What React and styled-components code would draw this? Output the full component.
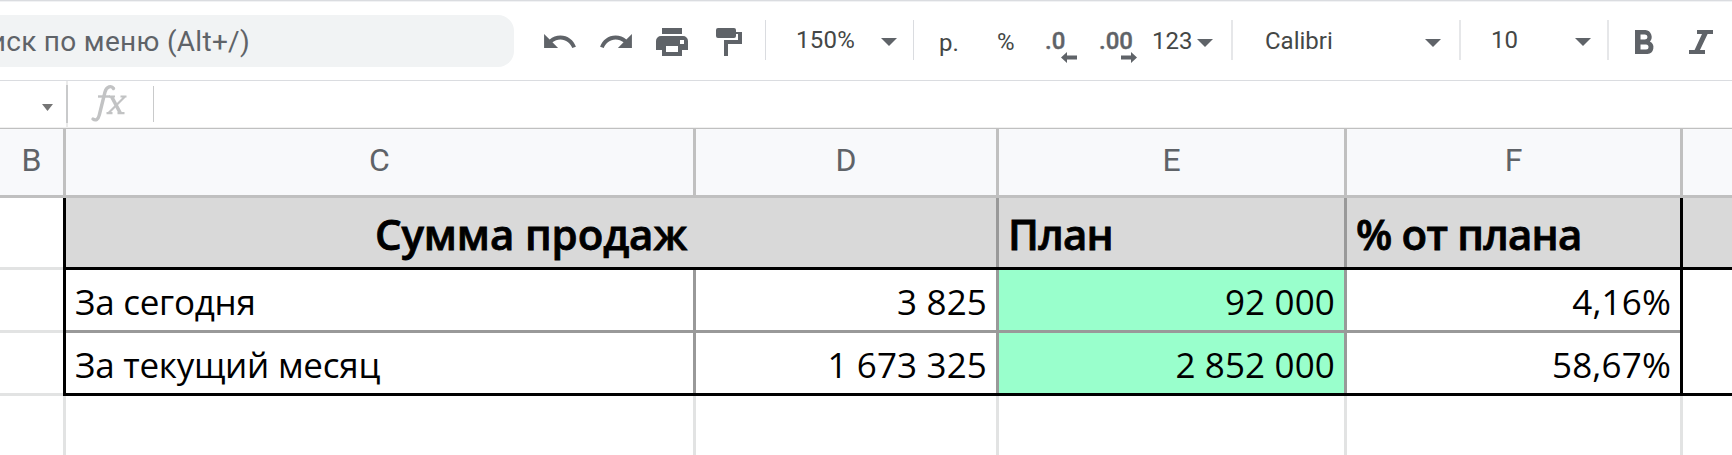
import React from 'react';
import styled, { createGlobalStyle } from 'styled-components';

const GlobalStyle = createGlobalStyle`
  *, *::before, *::after { box-sizing: border-box; }
  html, body { margin: 0; padding: 0; background: #fff; overflow: hidden; }
`;

const Page = styled.main`
  width: 1732px;
  height: 455px;
  overflow: hidden;
  background: #fff;
  font-family: Roboto, "Liberation Sans", sans-serif;
`;

/* Toolbar */

const Toolbar = styled.header`
  display: flex;
  align-items: flex-start;
  height: 81px;
  border-top: 1px solid #dadce0;
  border-bottom: 1px solid #dadce0;
  box-shadow: inset 0 1px 0 #f1f2f4;
`;

const MenuSearch = styled.div`
  flex: none;
  display: flex;
  justify-content: flex-end;
  width: 514px;
  height: 52px;
  margin-top: 14px;
  padding-right: 264px;
  border-radius: 0 16px 16px 0;
  background: #f1f3f4;
  color: #5f6368;
  font-size: 28px;
  line-height: 53px;
  letter-spacing: ${(p) => p.$spacing}px;
  white-space: nowrap;
  overflow: hidden;
`;

const Tool = styled.div`
  flex: none;
  width: ${(p) => p.$w}px;
  margin: ${(p) => p.$top}px 0 0 ${(p) => p.$gap}px;
  line-height: 0;
  color: #5f6368;

  svg { display: block; fill: currentColor; overflow: visible; }
`;

const ToolText = styled(Tool)`
  font-size: 24px;
  line-height: 30px;
  font-weight: ${(p) => (p.$medium ? 500 : 400)};
  color: ${(p) => (p.$medium ? '#5f6368' : '#444746')};
  letter-spacing: ${(p) => p.$spacing || 0}px;
  white-space: nowrap;
`;

const Decimals = styled(ToolText)`
  display: flex;
  flex-direction: column;
  -webkit-text-stroke: 0.4px currentColor;

  svg { align-self: flex-end; margin-top: -4px; }
`;

const Divider = styled.div`
  flex: none;
  width: ${(p) => p.$w || 2}px;
  height: 40px;
  margin: 19px 0 0 ${(p) => p.$gap}px;
  background: ${(p) => (p.$w === 1 ? '#dadce0' : '#e6e7e9')};
`;

const Caret = ({ w = 16, h = 8 }) => (
  <svg width={w} height={h} viewBox="0 0 16 8" preserveAspectRatio="none"><path d="M0 0h16L8 8z" /></svg>
);

const UndoIcon = () => (
  <svg width="32" height="14" viewBox="2 7 20.47 9">
    <path d="M12.5 8c-2.65 0-5.05.99-6.9 2.6L2 7v9h9l-3.62-3.62c1.39-1.16 3.16-1.88 5.12-1.88 3.54 0 6.55 2.31 7.6 5.5l2.37-.78C21.08 11.03 17.15 8 12.5 8z" />
  </svg>
);

const RedoIcon = () => (
  <svg width="32" height="14" viewBox="1.53 7 20.47 9">
    <path d="M18.4 10.6C16.55 8.99 14.15 8 11.5 8c-4.65 0-8.58 3.03-9.96 7.22L3.9 16c1.05-3.19 4.05-5.5 7.6-5.5 1.95 0 3.73.72 5.12 1.88L13 16h9V7l-3.6 3.6z" />
  </svg>
);

const PrintIcon = () => (
  <svg width="32" height="28" viewBox="0 0 32 28" fillRule="evenodd">
    <path d="M6 0h20v6H6zM5 8h22a5 5 0 0 1 5 5v9h-6v6H6v-6H0v-9a5 5 0 0 1 5-5zM10 18v6h12v-6zM24 12v4h4v-4z" />
  </svg>
);

const PaintIcon = () => (
  <svg width="26" height="28" viewBox="0 0 26 28">
    <path d="M2 0h16a2 2 0 0 1 2 2v2h6v12H12v12H8V12h14V6h-2v2a2 2 0 0 1-2 2H2a2 2 0 0 1-2-2V2a2 2 0 0 1 2-2z" />
  </svg>
);

const ArrowIcon = ({ right }) => (
  <svg width="16" height="11" viewBox="0 0 16 11">
    <path d={right ? 'M0 3.500h10V0l6 5.500-6 5.500V7.500H0z' : 'M16 3.500H6V0L0 5.500 6 11V7.500h10z'} />
  </svg>
);

const BoldIcon = () => (
  <svg width="20" height="24" viewBox="0 0 20 24" fillRule="evenodd">
    <path d="M0 0h10.5a7 7 0 0 1 4.4 11.6A6.6 6.6 0 0 1 12.5 24H0zM5.500 4.500v5h4.500a2.5 2.5 0 0 0 0-5zM5.500 14.5v5h5.500a2.5 2.5 0 0 0 0-5z" />
  </svg>
);

const ItalicIcon = () => (
  <svg width="24" height="24" viewBox="0 0 24 24">
    <path d="M8 0h16v4h-5.4L11 20h5v4H0v-4h5.6L13 4H8z" />
  </svg>
);

/* Formula bar */

const FormulaBar = styled.div`
  display: flex;
  align-items: flex-start;
  height: 48px;
  border-bottom: 1px solid #c0c0c0;
  box-shadow: inset 0 -1px 0 #f0f0f0;
`;

const NameBox = styled.div`
  width: 68px;
  height: 46px;
  padding: 23px 0 0 42px;
  border-right: 2px solid #c9cacb;
  border-image: linear-gradient(#ebebeb 5px, #c9cacb 5px, #c9cacb 41px, #ebebeb 41px) 1;

  svg { display: block; fill: #757575; }
`;

const FxLabel = styled.div`
  width: 86px;
  height: 36px;
  margin-top: 5px;
  padding-left: 23px;
  border-right: 1px solid #c9cacb;

  svg { display: block; overflow: visible; }
`;

const FxIcon = () => (
  <svg width="36" height="36" viewBox="0 0 36 36" fill="none" stroke="#c2c3c4" strokeLinecap="round">
    <path d="M22.500 2.500C20.5-.8 15.5.3 14 6L8.300 29C7.300 33.500 4.500 35 2 33" strokeWidth="3.400" />
    <path d="M7 10.500h12" strokeWidth="2.400" strokeLinecap="butt" />
    <path d="M20.500 10.500l8.800 16.500" strokeWidth="3.600" strokeLinecap="butt" />
    <path d="M34 10.500L17.500 27M18 10.500h6M29.500 10.500h6M15.500 27.200h6M26.500 27.200h7" strokeWidth="2.200" strokeLinecap="butt" />
  </svg>
);

/* Sheet: tracks alternate between cells and 3px rules */

const Sheet = styled.section`
  display: grid;
  grid-template-columns: 63px 3px 627px 3px 300px 3px 345px 3px 333px 3px 49px;
  grid-template-rows: 66px 3px 69px 3px 60px 3px 60px 3px 59px;
`;

const Rule = styled.div`
  grid-column: ${(p) => p.$col};
  grid-row: ${(p) => p.$row};
  background: ${(p) => p.$color};
`;

const ColumnHeader = styled.div`
  grid-column: ${(p) => p.$col};
  grid-row: 1;
  background: #f8f9fb;
  color: #5f6368;
  font-size: 32px;
  line-height: 63px;
  text-align: center;
`;

const Cell = styled.div`
  grid-column: ${(p) => p.$col};
  grid-row: ${(p) => p.$row};
  padding: 0 9px;
  background: ${(p) => p.$fill || '#fff'};
  color: #000;
  font-family: "Open Sans", "Noto Sans", sans-serif;
  font-size: 35px;
  line-height: 64px;
  text-align: ${(p) => p.$align || 'left'};
  letter-spacing: ${(p) => p.$spacing || 0}px;
  white-space: nowrap;
  overflow: hidden;
`;

const TitleCell = styled(Cell)`
  font-size: 42px;
  font-weight: 600;
  line-height: 71px;
  -webkit-text-stroke: 0.8px currentColor;
`;

const LINE = '#c0c0c0';
const GRID = '#e2e3e3';
const INNER = '#999999';
const GRAY = '#d9d9d9';
const GREEN = '#99ffcc';

const headers = [['B', 1], ['C', 3], ['D', 5], ['E', 7], ['F', 9], ['', 11]];

const titles = [
  { col: '3 / 6', text: 'Сумма продаж', align: 'center', spacing: -0.1 },
  { col: 7, text: 'План', spacing: -0.8 },
  { col: 9, text: '% от плана', spacing: -0.8 },
  { col: 11, text: '' },
];

const rows = [
  { row: 5, cells: ['За сегодня', '3 825', '92 000', '4,16%'] },
  { row: 7, cells: ['За текущий месяц', '1 673 325', '2 852 000', '58,67%'] },
];

const rules = [
  ...[2, 4, 6, 8, 10].map((c) => [c, '1', LINE]),
  ['1 / -1', '2', LINE],
  ['1', '4', GRID], ['1', '6', GRID], ['1', '8', GRID],
  ...[2, 4, 6, 8, 10].map((c) => [c, '9', GRID]),
  ['3 / 10', '6', INNER],
  ['4', '5 / 8', INNER], ['6', '3 / 8', INNER], ['8', '3 / 8', INNER],
  ['2 / -1', '4', '#000'], ['2 / -1', '8', '#000'],
  ['2', '3 / 9', '#000'], ['10', '3 / 9', '#000'],
];

export default function App() {
  return (
    <Page>
      <GlobalStyle />
      <Toolbar>
        <MenuSearch $spacing={0.3}>иск по меню (Alt+/)</MenuSearch>
        <Tool $gap={30} $w={32} $top={33}><UndoIcon /></Tool>
        <Tool $gap={24} $w={32} $top={33}><RedoIcon /></Tool>
        <Tool $gap={24} $w={32} $top={27}><PrintIcon /></Tool>
        <Tool $gap={28} $w={26} $top={27}><PaintIcon /></Tool>
        <Divider $gap={23} $w={1} />
        <ToolText $gap={30} $w={60} $top={24} $spacing={0.3}>150%</ToolText>
        <Tool $gap={25} $w={16} $top={37}><Caret /></Tool>
        <Divider $gap={16} $w={1} />
        <ToolText $gap={25} $w={24} $top={27}>р.</ToolText>
        <ToolText $gap={34} $w={20} $top={26}>%</ToolText>
        <Decimals $gap={28} $w={32} $top={25} $medium>.0<ArrowIcon /></Decimals>
        <Decimals $gap={22} $w={38} $top={25} $medium>.00<ArrowIcon right /></Decimals>
        <ToolText $gap={15} $w={42} $top={25}>123</ToolText>
        <Tool $gap={3} $w={16} $top={38}><Caret /></Tool>
        <Divider $gap={18} />
        <ToolText $gap={32} $w={72} $top={25}>Calibri</ToolText>
        <Tool $gap={88} $w={16} $top={38}><Caret /></Tool>
        <Divider $gap={18} />
        <ToolText $gap={30} $w={34} $top={24}>10</ToolText>
        <Tool $gap={50} $w={16} $top={37}><Caret /></Tool>
        <Divider $gap={16} />
        <Tool $gap={26} $w={20} $top={29}><BoldIcon /></Tool>
        <Tool $gap={34} $w={24} $top={29}><ItalicIcon /></Tool>
      </Toolbar>
      <FormulaBar>
        <NameBox><Caret w={11} h={7} /></NameBox>
        <FxLabel><FxIcon /></FxLabel>
      </FormulaBar>
      <Sheet>
        {headers.map(([text, col]) => (
          <ColumnHeader key={col} $col={col}>{text}</ColumnHeader>
        ))}
        {titles.map((t) => (
          <TitleCell
            key={t.col}
            $col={t.col}
            $row={3}
            $align={t.align}
            $spacing={t.spacing}
            $fill={GRAY}
          >
            {t.text}
          </TitleCell>
        ))}
        {rows.map(({ row, cells }) =>
          cells.map((text, i) => (
            <Cell
              key={`${row}-${i}`}
              $col={3 + i * 2}
              $row={row}
              $align={i === 0 ? 'left' : 'right'}
              $spacing={i === 0 ? -0.25 : 0.15}
              $fill={i === 2 ? GREEN : undefined}
            >
              {text}
            </Cell>
          ))
        )}
        {rules.map(([col, row, color]) => (
          <Rule key={`${col}-${row}`} $col={col} $row={row} $color={color} />
        ))}
      </Sheet>
    </Page>
  );
}
